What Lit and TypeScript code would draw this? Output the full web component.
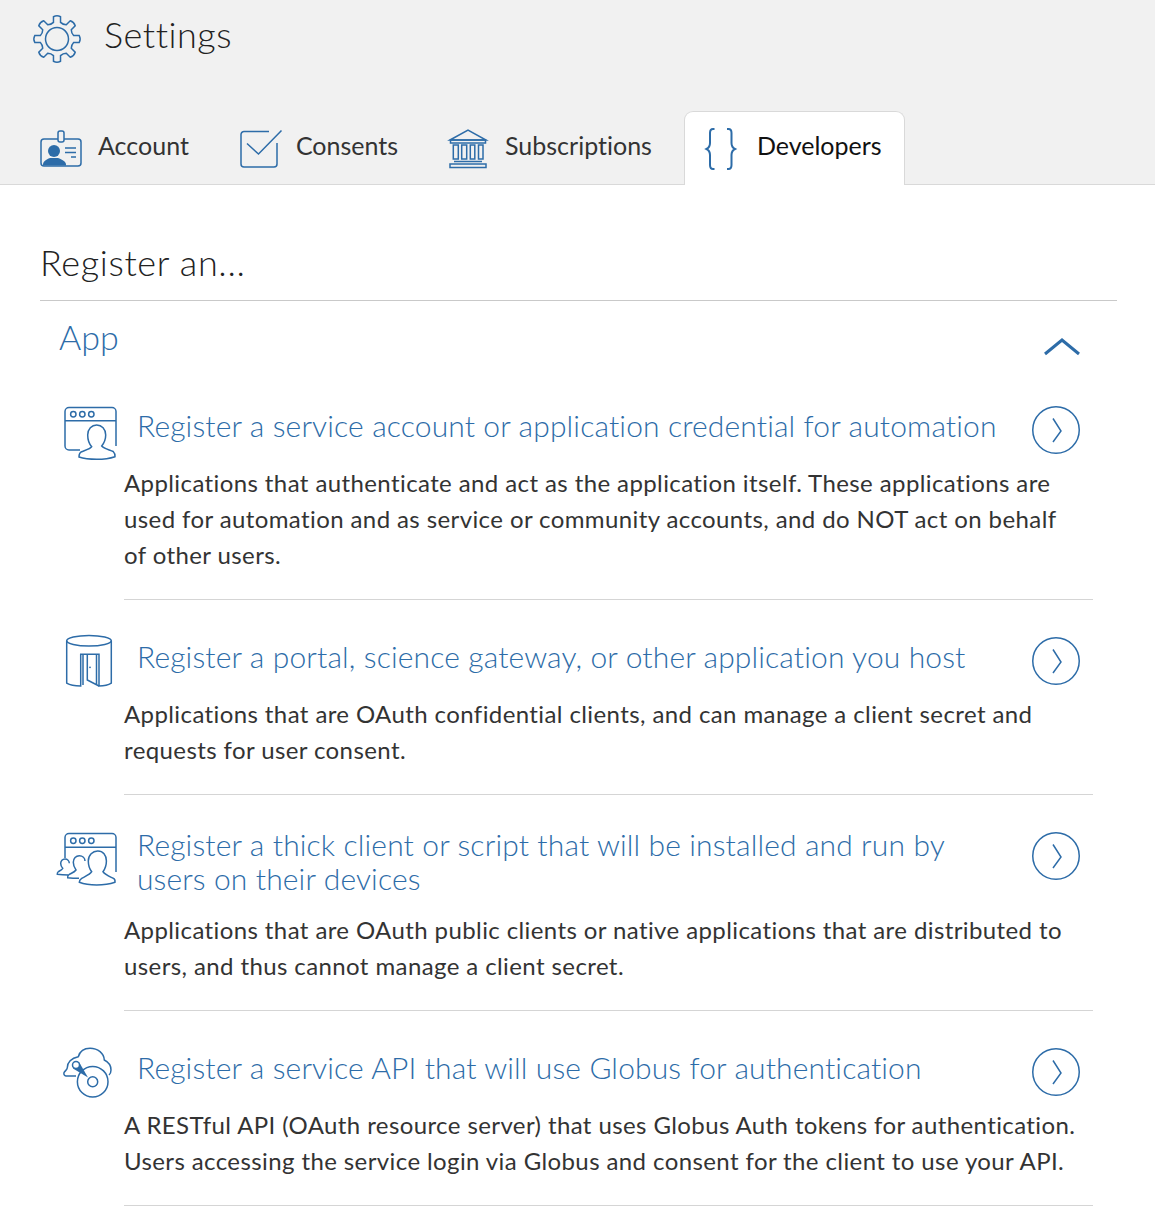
import { LitElement, html, css, svg } from 'lit';
import { customElement } from 'lit/decorators.js';

// 8 tooth outline, computed so the teeth stay even
function gearPath(cx: number, cy: number, outer: number, root: number) {
  const pts: string[] = [];
  const at = (deg: number, r: number) => {
    const a = ((deg - 90) * Math.PI) / 180;
    return `${(cx + r * Math.cos(a)).toFixed(2)} ${(cy + r * Math.sin(a)).toFixed(2)}`;
  };
  for (let i = 0; i < 8; i++) {
    const c = i * 45;
    pts.push(`${i ? 'L' : 'M'}${at(c - 12, outer - 6.5)}`);
    pts.push(`L${at(c - 9, outer - 1)}`);
    pts.push(`Q${at(c, outer + 0.6)} ${at(c + 9, outer - 1)}`);
    pts.push(`L${at(c + 12, outer - 6.5)}`);
    pts.push(`Q${at(c + 22.5, root - 1.5)} ${at(c + 33, outer - 6.5)}`);
  }
  return pts.join(' ') + ' Z';
}

const accountIcon = svg`
  <rect x="1" y="9" width="40" height="27" rx="3"></rect>
  <rect x="18" y="1" width="6" height="11" rx="2" fill="#f1f1f1"></rect>
  <circle cx="14" cy="21" r="6" class="fill"></circle>
  <path class="fill" d="M3 35.500v-1c0-3 3-5 7-6.500h8c4 1.500 8 3.500 8 6.500v1z"></path>
  <path d="M25 18h11M25 22.500h11M31 27h5"></path>`;

const consentsIcon = svg`
  <path d="M29 1.500H4a3 3 0 0 0-3 3V34a3 3 0 0 0 3 3h30a3 3 0 0 0 3-3V13"></path>
  <path d="M7 13.500 18.500 24 41.500 .500"></path>`;

const subscriptionsIcon = svg`
  <path d="M1 11 19 1 37 11z"></path>
  <rect x="1.500" y="11" width="35" height="3"></rect>
  <rect x="4.300" y="16" width="5" height="14"></rect>
  <rect x="12.700" y="16" width="5" height="14"></rect>
  <rect x="21.300" y="16" width="4.500" height="14"></rect>
  <rect x="29.500" y="16" width="4.500" height="14"></rect>
  <path d="M5 32.500h28"></path>
  <rect x="1" y="35" width="36" height="3.500"></rect>`;

const developersIcon = svg`
  <path class="thick" d="M9.500 1H8C5.500 1 5 2.500 5 5v10c0 3-.5 4.500-3.500 6C4.500 22.500 5 24 5 27v10c0 2.500.5 4 3 4h1.500"></path>
  <path class="thick" d="M22 1h1.500C26 1 26.500 2.500 26.500 5v10c0 3 .5 4.500 3.500 6-3 1.500-3.500 3-3.500 6v10c0 2.500-.5 4-3 4H22"></path>`;

const windowHead = (y: number) => svg`
  <path d="M9 ${y + 6.5}H60"></path>
  <circle cx="17.300" cy="${y}" r="2.700"></circle>
  <circle cx="26.300" cy="${y}" r="2.700"></circle>
  <circle cx="35.300" cy="${y}" r="2.700"></circle>`;

const serviceIcon = svg`
  <path d="M24 47H13a4 4 0 0 1-4-4V8.500a4 4 0 0 1 4-4h43a4 4 0 0 1 4 4V43"></path>
  ${windowHead(11.3)}
  <path d="M40.700 22c-5 0-9 4-9 10 0 5 2 9.500 4 11.700-1 2-6 3.500-10 5-2 .8-2.700 3-2.700 5.300 5 1.700 11 2.300 17.700 2.300 7 0 13-.8 18.300-2.600.2-2-.6-4-1.800-5.200-4-1.800-9.500-3-11.500-5.500 2-2.500 4-6.500 4-11 0-6-4-10-9-10z"></path>`;

const portalIcon = svg`
  <ellipse cx="33" cy="6.700" rx="22.300" ry="5.300"></ellipse>
  <path d="M10.700 6.700v42.500c3 1.800 8 2.800 14 2.800V20.300H43V52c5 0 9.500-1 12.300-2.800V6.700"></path>
  <path d="M31.300 20.300V46L43 52M27 21v30M40.500 21v30"></path>
  <circle cx="34" cy="33.300" r=".9" class="fill"></circle>`;

const thickIcon = svg`
  <path d="M9 29V8.500a4 4 0 0 1 4-4h43a4 4 0 0 1 4 4V43"></path>
  ${windowHead(11.7)}
  <path d="M41.700 22c-5 0-9.400 4-9.400 10 0 4.500 1.300 8 3.400 10.700-1.500 2.800-6 4.500-10 6.600-1.700 1-2.400 2.300-2.400 4 5 1.900 11 2.700 17.400 2.700 7 0 13-.9 18.300-2.700.2-2-.6-3.600-1.700-4-4-2-8-3.500-10.300-6.600 2-2.700 3.400-6.200 3.400-10.700 0-6-3.500-10-8.500-10z"></path>
  <path d="M23 49.300c-4 0-8-.2-11.300-.6-.3-1.600.2-2.600 1.600-3.400 2.500-1.300 5-2 6.700-4.300-1.500-2-2.700-4.700-2.700-7.700 0-4 2.700-6.600 6-6.600s5.700 2.300 5.700 5.300"></path>
  <path d="M12.300 46c-3.700 0-7.500-.2-11-.7-.2-1.300.3-2 1-2.600 1.500-1 3.300-1.700 4.400-3.400-1.200-1.300-2-3-2-4.800C4.700 32 6.500 30 9 30c2.400 0 4.300 1.800 4.300 4.300"></path>`;

const apiIcon = svg`
  <path d="M20 31H10a2.500 2.500 0 0 1-2-3.300c1-2 3.300-3 3.300-5-.1-5 4-9.700 11-11C24 6 29 3.300 34 3.300c8 0 14 5 14.300 11.700 4 2 6.700 6 6.700 10 0 2-.8 4-2 5"></path>
  <circle cx="36.700" cy="36.700" r="15.300"></circle>
  <circle cx="36.700" cy="36.700" r="5"></circle>
  <path class="fill" d="M17 23.500 23 17 32 32.500z"></path>
  <circle cx="20" cy="20" r="3.500" fill="#fff"></circle>`;

const ARROW = svg`<circle cx="24" cy="24" r="23.250"></circle><path d="M21 12.500 29 25 21 36"></path>`;

const ROWS = [
  {
    icon: serviceIcon,
    title: 'Register a service account or application credential for automation',
    text: 'Applications that authenticate and act as the application itself. These applications are used for automation and as service or community accounts, and do NOT act on behalf of other users.',
  },
  {
    icon: portalIcon,
    title: 'Register a portal, science gateway, or other application you host',
    text: 'Applications that are OAuth confidential clients, and can manage a client secret and requests for user consent.',
  },
  {
    icon: thickIcon,
    title: 'Register a thick client or script that will be installed and run by users on their devices',
    text: 'Applications that are OAuth public clients or native applications that are distributed to users, and thus cannot manage a client secret.',
    wrap: true,
  },
  {
    icon: apiIcon,
    title: 'Register a service API that will use Globus for authentication',
    text: 'A RESTful API (OAuth resource server) that uses Globus Auth tokens for authentication. Users accessing the service login via Globus and consent for the client to use your API.',
  },
];

const TABS = [
  { label: 'Account', icon: accountIcon, w: 46, h: 38, vb: '0 0 46 38' },
  { label: 'Consents', icon: consentsIcon, w: 44, h: 38, vb: '0 0 44 38' },
  { label: 'Subscriptions', icon: subscriptionsIcon, w: 44, h: 40, vb: '0 0 44 40' },
  { label: 'Developers', icon: developersIcon, w: 40, h: 42, vb: '0 0 40 42', active: true },
];

@customElement('app-root')
export class AppRoot extends LitElement {
  static styles = css`
    :host {
      display: block;
      font-family: Lato, "Open Sans", sans-serif;
      font-variant-ligatures: none;
      color: #222;
      background: #fff;
      overflow: hidden;
    }

    svg {
      display: block;
      fill: none;
      stroke: #2d6ca8;
      stroke-width: 1.5;
      overflow: visible;
      flex: none;
    }

    svg .fill {
      fill: #2d6ca8;
      stroke: none;
    }

    svg .thick {
      stroke-width: 2;
    }

    header {
      height: 184px;
      background: #f1f1f1;
      border-bottom: 1px solid #d9d9d9;
      display: flex;
      flex-direction: column;
      justify-content: space-between;
    }

    .page-title {
      display: flex;
      align-items: flex-start;
      padding: 15px 0 0 33px;
      gap: 23px;
      font-size: 36px;
      font-weight: 300;
      line-height: 38px;
      letter-spacing: 0.5px;
    }

    .tabs {
      display: flex;
      padding-left: 19px;
      margin-bottom: -1px;
    }

    .tab {
      display: flex;
      align-items: center;
      gap: 12px;
      height: 74px;
      padding: 0 20px;
      margin-right: 9px;
      font-size: 25px;
      box-sizing: border-box;
      border: 1px solid transparent;
      border-bottom: 0;
      color: #333;
    }

    .tab span {
      margin-top: -8px;
    }

    .tab.active {
      margin-left: 2px;
      padding-right: 22px;
      background: #fff;
      border-color: #d9d9d9;
      border-radius: 9px 9px 0 0;
      color: #111;
    }

    main {
      padding: 0 38px 0 40px;
    }

    h1 {
      margin: 0;
      padding: 55px 0 16px 0;
      font-size: 36px;
      font-weight: 300;
      line-height: 44px;
      letter-spacing: 0.65px;
      border-bottom: 1px solid #c9c9c9;
    }

    .section-head {
      display: flex;
      justify-content: space-between;
      padding: 16px 37px 0 19px;
      height: 51px;
      color: #2d6ca8;
      font-size: 34px;
      font-weight: 300;
      line-height: 40px;
    }

    .chevron {
      margin-top: 22px;
      stroke-width: 3;
    }

    .row {
      margin: 0 24px 0 84px;
      padding: 37px 0 26px;
      border-bottom: 1px solid #d5d5d5;
    }

    .row:first-of-type {
      padding-top: 38px;
    }

    .row-head {
      display: flex;
      align-items: flex-start;
      margin-left: -68px;
      margin-right: 13px;
    }

    .row-icon {
      margin: -3px 17px -7px 0;
    }

    .row-title {
      flex: 1;
      margin-top: 2px;
      padding-right: 30px;
      font-size: 30px;
      font-weight: 300;
      line-height: 34px;
      letter-spacing: 0.13px;
      color: #2d6ca8;
    }

    .row-title.wrap {
      margin-top: -5px;
      padding-right: 60px;
      padding-bottom: 6px;
    }

    .row-text {
      margin: 11px 0 0;
      padding-right: 15px;
      font-size: 24px;
      line-height: 36px;
      letter-spacing: 0.4px;
      color: #333;
    }
  `;

  render() {
    return html`
      <header>
        <div class="page-title">
          <svg width="48" height="48" viewBox="0 0 48 48">
            <path d=${gearPath(24, 24, 23.5, 17)}></path>
            <circle cx="24" cy="24" r="11.500"></circle>
          </svg>
          Settings
        </div>
        <nav class="tabs">
          ${TABS.map(
            (t) => html`
              <div class="tab ${t.active ? 'active' : ''}">
                <svg width=${t.w} height=${t.h} viewBox=${t.vb}>${t.icon}</svg>
                <span>${t.label}</span>
              </div>
            `
          )}
        </nav>
      </header>
      <main>
        <h1>Register an...</h1>
        <div class="section-head">
          App
          <svg class="chevron" width="36" height="16" viewBox="0 0 36 16">
            <path d="M1 15 18 1 35 15"></path>
          </svg>
        </div>
        ${ROWS.map(
          (r) => html`
            <section class="row">
              <div class="row-head">
                <svg class="row-icon" width="64" height="58" viewBox="0 0 64 58">${r.icon}</svg>
                <div class="row-title ${r.wrap ? 'wrap' : ''}">${r.title}</div>
                <svg width="48" height="48" viewBox="0 0 48 48">${ARROW}</svg>
              </div>
              <p class="row-text">${r.text}</p>
            </section>
          `
        )}
      </main>
    `;
  }
}
